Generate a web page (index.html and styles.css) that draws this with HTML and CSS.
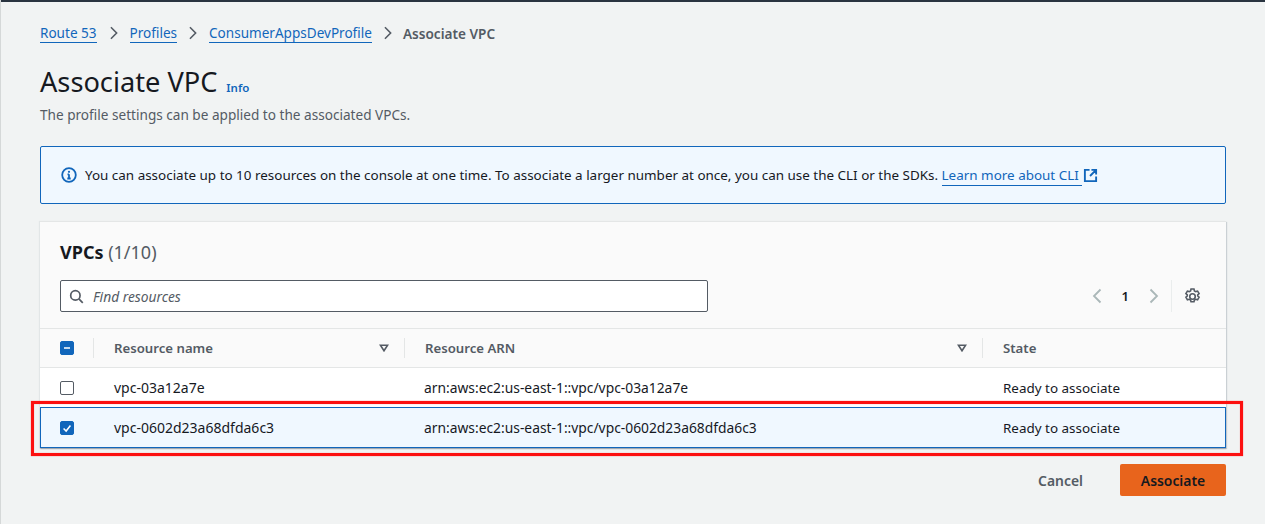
FILE: index.html
```html
<!DOCTYPE html>
<html lang="en">
<head>
<meta charset="utf-8">
<title>Associate VPC</title>
<link rel="stylesheet" href="styles.css">
</head>
<body>
<div class="topbar"></div>
<main class="page">
  <nav class="crumbs">
    <a href="#">Route 53</a>
    <svg class="sep" viewBox="0 0 10 16"><path d="M1.500 1.500 8 8l-6.500 6.500"/></svg>
    <a href="#">Profiles</a>
    <svg class="sep" viewBox="0 0 10 16"><path d="M1.500 1.500 8 8l-6.500 6.500"/></svg>
    <a href="#">ConsumerAppsDevProfile</a>
    <svg class="sep" viewBox="0 0 10 16"><path d="M1.500 1.500 8 8l-6.500 6.500"/></svg>
    <span class="current">Associate VPC</span>
  </nav>
  <div class="title-row">
    <h1>Associate VPC</h1>
    <a class="info" href="#">Info</a>
  </div>
  <p class="desc">The profile settings can be applied to the associated VPCs.</p>

  <div class="alert">
    <svg class="alert-icon" viewBox="0 0 16 16"><circle cx="8" cy="8" r="6.800"/><path d="M8 7.200v4.300M6.300 11.500h3.400M6.500 7.300H8"/><circle class="dot" cx="8" cy="4.800" r="1.100"/></svg>
    <span>You can associate up to 10 resources on the console at one time. To associate a larger number at once, you can use the CLI or the SDKs. <a href="#">Learn more about CLI&nbsp;</a></span>
    <svg class="ext" viewBox="0 0 16 16"><path d="M7 2H2v12h12V9M9 2h5v5M14 2 7.500 8.500"/></svg>
  </div>

  <section class="card">
    <header class="card-head">
      <h2>VPCs <span class="count">(1/10)</span></h2>
      <div class="tools">
        <div class="search">
          <svg viewBox="0 0 16 16"><circle cx="6.800" cy="6.800" r="5"/><path d="m10.500 10.500 4.200 4.200"/></svg>
          <span>Find resources</span>
        </div>
        <div class="pager">
          <svg class="chev" viewBox="0 0 10 16"><path d="M8.500 1.500 2 8l6.500 6.500"/></svg>
          <b>1</b>
          <svg class="chev" viewBox="0 0 10 16"><path d="M1.500 1.500 8 8l-6.500 6.500"/></svg>
          <i class="divider"></i>
          <svg class="gear" viewBox="0 0 16 16"><circle cx="8" cy="8" r="2.600"/><path d="M6.600 1h2.800l.4 1.700 1.300.7 1.700-.5 1.400 2.400-1.300 1.200v1l1.300 1.200-1.400 2.400-1.700-.5-1.300.7-.4 1.700H6.600l-.4-1.700-1.300-.7-1.700.5-1.400-2.400 1.300-1.200v-1L1.800 5.300l1.400-2.400 1.700.5 1.300-.7z"/></svg>
        </div>
      </div>
    </header>
    <div class="row head">
      <div class="c-check"><span class="box on"><svg viewBox="0 0 14 14"><path d="M3.500 7h7"/></svg></span></div>
      <div class="c-name"><span>Resource name</span><svg class="sort" viewBox="0 0 12 10"><path d="M1.500 1.500h9L6 8.500z"/></svg></div>
      <div class="c-arn"><span>Resource ARN</span><svg class="sort" viewBox="0 0 12 10"><path d="M1.500 1.500h9L6 8.500z"/></svg></div>
      <div class="c-state"><span>State</span></div>
    </div>
    <div class="row">
      <div class="c-check"><span class="box"></span></div>
      <div class="c-name"><span>vpc-03a12a7e</span></div>
      <div class="c-arn"><span>arn:aws:ec2:us-east-1::vpc/vpc-03a12a7e</span></div>
      <div class="c-state"><span>Ready to associate</span></div>
    </div>
    <div class="row selected">
      <div class="c-check"><span class="box on"><svg viewBox="0 0 14 14"><path d="m3 7.500 3 3 5-6.500"/></svg></span></div>
      <div class="c-name"><span>vpc-0602d23a68dfda6c3</span></div>
      <div class="c-arn"><span>arn:aws:ec2:us-east-1::vpc/vpc-0602d23a68dfda6c3</span></div>
      <div class="c-state"><span>Ready to associate</span></div>
    </div>
  </section>

  <div class="actions">
    <button class="cancel" type="button">Cancel</button>
    <button class="primary" type="button">Associate</button>
  </div>
  <div class="highlight"></div>
</main>
</body>
</html>
```
FILE: styles.css
```css
* { box-sizing: border-box; }
html, body { margin: 0; height: 100%; overflow: hidden; }
body {
  background: #f1f3f3;
  color: #16191f;
  font-family: "Noto Sans", "Open Sans", sans-serif;
  font-size: 13.450px;
  border-left: 1px solid #d5d8d8;
}
.topbar { height: 2px; background: #2a3440; margin-left: -1px; }
.page { position: relative; padding: 21px 39px 0 39px; }
a { color: #1166bb; text-decoration: none; }

.crumbs { display: flex; align-items: center; height: 20px; font-size: 13.550px; }
.crumbs a { border-bottom: 1px solid #1166bb; line-height: 17px; padding-top: 1px; }
.crumbs a:first-child { margin-right: 1px; }
.sep { width: 10px; height: 14px; margin: 0 11px; fill: none; stroke: #545b64; stroke-width: 1.800; }
.current { color: #545b64; font-weight: 600; font-size: 13.600px; margin-left: -1px; }

.title-row { display: flex; align-items: baseline; margin-top: 20px; height: 38px; }
h1 { margin: 0; font-size: 27.200px; font-weight: 400; line-height: 38px; }
.info { font-size: 11.500px; font-weight: 600; margin-left: 9px; }
.desc { margin: 5px 0 0; color: #545b64; line-height: 18px; font-size: 13.600px; }

.alert {
  display: flex; align-items: center;
  margin-top: 22px; height: 58px; padding: 0 20px;
  background: #f0f8ff; border: 1px solid #1166bb; border-radius: 2px;
}
.alert-icon { width: 16px; height: 16px; margin-right: 8px; fill: none; stroke: #1166bb; stroke-width: 1.800; flex: none; }
.alert-icon .dot { fill: #1166bb; stroke: none; }
.alert a { border-bottom: 1px solid #1166bb; padding-bottom: 1px; }
.ext { width: 15px; height: 15px; margin-left: 1px; fill: none; stroke: #1166bb; stroke-width: 2; flex: none; }

.card {
  margin-top: 17px; background: #fff;
  border-top: 1px solid #e4e6e6;
  box-shadow: 1px 1px 1px rgba(0, 26, 51, .16), -1px 0 1px rgba(0, 26, 51, .06);
}
.card-head { background: #fafafa; padding: 18px 20px 0; height: 107px; border-bottom: 1px solid #e4e6e6; }
h2 { margin: 0; font-size: 18px; font-weight: 700; line-height: 24px; }
.count { font-weight: 400; color: #545b64; }
.tools { display: flex; align-items: center; justify-content: space-between; margin-top: 16px; }
.search {
  display: flex; align-items: center; width: 648px; height: 32px; padding: 0 8px;
  background: #fff; border: 1px solid #545b64; border-radius: 2px;
  color: #545b64; font-style: italic; font-size: 13.800px;
}
.search svg { width: 15px; height: 15px; margin-right: 9px; fill: none; stroke: #545b64; stroke-width: 1.800; }
.pager { display: flex; align-items: center; height: 32px; }
.chev { width: 10px; height: 16px; fill: none; stroke: #aab7b8; stroke-width: 1.800; }
.pager b { font-size: 13px; font-weight: 600; margin: 0 20px; }
.divider { width: 1px; height: 32px; background: #eaeded; margin: 0 12px; }
.gear { width: 17px; height: 17px; margin: 1px 5px 0 0; fill: none; stroke: #545b64; stroke-width: 1.500; }

.row { display: flex; height: 40px; align-items: center; border-bottom: 1px solid #eaeded; }
.row.head { background: #fafafa; height: 39px; border-bottom: 1px solid #e4e6e6; color: #545b64; font-weight: 600; font-size: 13.200px; }
.row.selected { background: #f0f8ff; border-bottom: 0; height: 41px; box-shadow: inset 0 0 0 1px #1166bb, 0 1px 1px rgba(0,26,51,.2); margin-top: -1px; }
.row > div { display: flex; align-items: center; height: 20px; position: relative; }
.c-check { width: 53px; padding-left: 20px; }
.c-name { width: 311px; padding: 0 15px 0 21px; justify-content: space-between; font-size: 14px; }
.c-arn { width: 578px; padding: 0 15px 0 20px; justify-content: space-between; font-size: 13.830px; }
.c-state { padding-left: 21px; }
.head > .c-name, .head > .c-arn { font-size: 13.200px; }
.head > .c-arn { padding-left: 21px; }
.head > .c-name::before, .head > .c-arn::before, .head > .c-state::before {
  content: ""; position: absolute; left: 0; top: 0; width: 1px; height: 20px; background: #e4e6e6;
}
.box {
  display: block; width: 14px; height: 14px; border: 1px solid #545b64; border-radius: 2px; background: #fff;
}
.box.on { background: #1166bb; border-color: #1166bb; }
.box svg { display: block; width: 12px; height: 12px; fill: none; stroke: #fff; stroke-width: 1.800; }
.sort { width: 10px; height: 8px; fill: none; stroke: #545b64; stroke-width: 2; flex: none; }

.actions { display: flex; justify-content: flex-end; align-items: center; margin-top: 16px; }
button { font: inherit; font-weight: 600; border: 0; cursor: pointer; font-size: 13.900px; }
.cancel { background: none; color: #545b64; margin-right: 37px; padding: 0; }
.primary { width: 106px; height: 32px; background: #e8641c; color: #16191f; border-radius: 2px; }

.highlight {
  position: absolute; left: 30px; top: 399px; width: 1212px; height: 55px;
  border: 3px solid #fc1010; box-shadow: 0 0 1px rgba(252, 16, 16, .6), inset 0 0 1px rgba(252, 16, 16, .6); pointer-events: none;
}
```
